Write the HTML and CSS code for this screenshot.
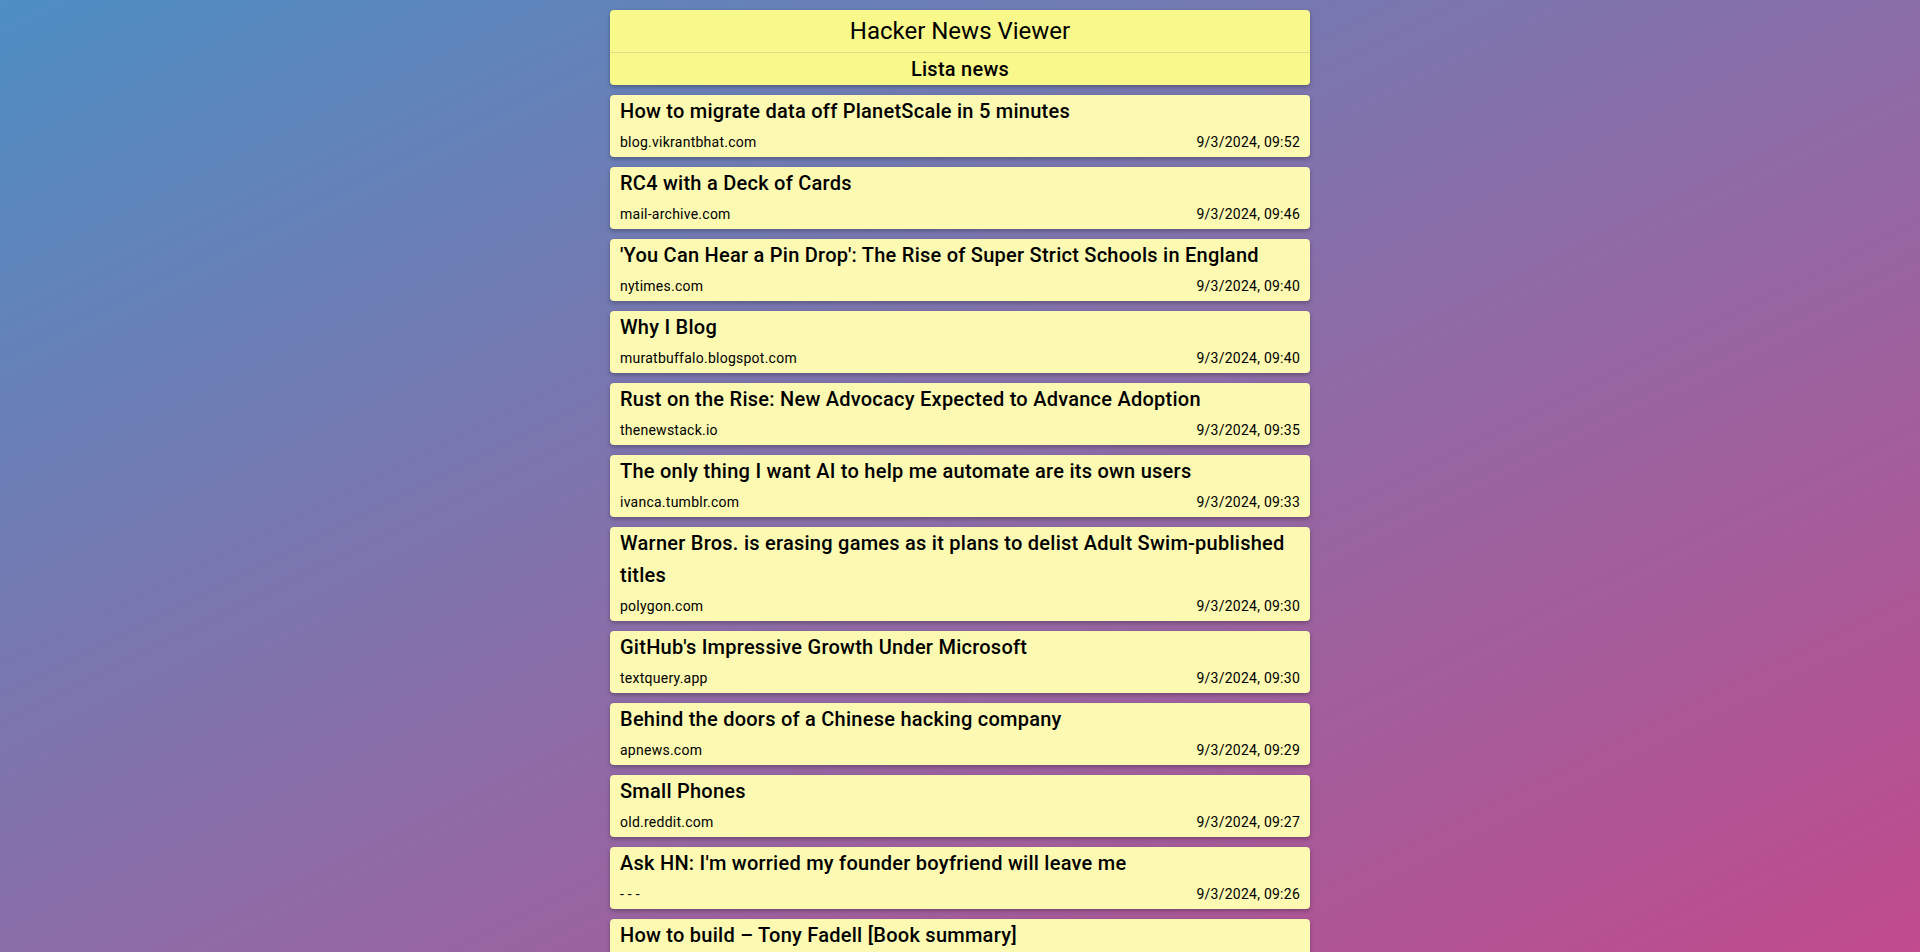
FILE: index.html
```html
<!DOCTYPE html>
<html lang="it">
<head>
<meta charset="utf-8">
<title>Hacker News Viewer</title>
<link rel="stylesheet" href="styles.css">
</head>
<body>
<main class="app">
  <header class="app-header">
    <h1 class="app-title">Hacker News Viewer</h1>
    <h2 class="app-subtitle">Lista news</h2>
  </header>
  <ul class="news-list">
    <li class="news-card"><h3 class="news-title">How to migrate data off PlanetScale in 5 minutes</h3><div class="news-meta"><span>blog.vikrantbhat.com</span><span>9/3/2024, 09:52</span></div></li>
    <li class="news-card"><h3 class="news-title">RC4 with a Deck of Cards</h3><div class="news-meta"><span>mail-archive.com</span><span>9/3/2024, 09:46</span></div></li>
    <li class="news-card"><h3 class="news-title">'You Can Hear a Pin Drop': The Rise of Super Strict Schools in England</h3><div class="news-meta"><span>nytimes.com</span><span>9/3/2024, 09:40</span></div></li>
    <li class="news-card"><h3 class="news-title">Why I Blog</h3><div class="news-meta"><span>muratbuffalo.blogspot.com</span><span>9/3/2024, 09:40</span></div></li>
    <li class="news-card"><h3 class="news-title">Rust on the Rise: New Advocacy Expected to Advance Adoption</h3><div class="news-meta"><span>thenewstack.io</span><span>9/3/2024, 09:35</span></div></li>
    <li class="news-card"><h3 class="news-title">The only thing I want AI to help me automate are its own users</h3><div class="news-meta"><span>ivanca.tumblr.com</span><span>9/3/2024, 09:33</span></div></li>
    <li class="news-card"><h3 class="news-title">Warner Bros. is erasing games as it plans to delist Adult Swim-published titles</h3><div class="news-meta"><span>polygon.com</span><span>9/3/2024, 09:30</span></div></li>
    <li class="news-card"><h3 class="news-title">GitHub's Impressive Growth Under Microsoft</h3><div class="news-meta"><span>textquery.app</span><span>9/3/2024, 09:30</span></div></li>
    <li class="news-card"><h3 class="news-title">Behind the doors of a Chinese hacking company</h3><div class="news-meta"><span>apnews.com</span><span>9/3/2024, 09:29</span></div></li>
    <li class="news-card"><h3 class="news-title">Small Phones</h3><div class="news-meta"><span>old.reddit.com</span><span>9/3/2024, 09:27</span></div></li>
    <li class="news-card"><h3 class="news-title">Ask HN: I'm worried my founder boyfriend will leave me</h3><div class="news-meta"><span>- - -</span><span>9/3/2024, 09:26</span></div></li>
    <li class="news-card"><h3 class="news-title">How to build – Tony Fadell [Book summary]</h3><div class="news-meta"><span>- - -</span><span>9/3/2024, 09:25</span></div></li>
  </ul>
</main>
</body>
</html>
```
FILE: styles.css
```css
html, body {
  margin: 0;
  padding: 0;
}

body {
  min-height: 100vh;
  font-family: Roboto, "Liberation Sans", Arial, sans-serif;
  color: #000;
  background: linear-gradient(to bottom right, #4d8ec3, #8a6ea8 50%, #c04a8c) fixed;
}

.app {
  width: 700px;
  margin: 0 auto;
  padding: 10px 0;
  display: flex;
  flex-direction: column;
  gap: 10px;
}

.app-header {
  background: #f9f88a;
  border-radius: 4px;
  box-shadow: 0 2px 4px rgba(0, 0, 0, 0.28);
  text-align: center;
}

.app-title {
  margin: 0;
  font-size: 24px;
  font-weight: 400;
  line-height: 42px;
  border-bottom: 1px solid #e0da8c;
}

.app-subtitle {
  margin: 0;
  font-size: 20px;
  font-weight: 500;
  line-height: 32px;
  letter-spacing: 0.25px;
}

.news-list {
  list-style: none;
  margin: 0;
  padding: 0;
  display: flex;
  flex-direction: column;
  gap: 10px;
}

.news-card {
  background: #fbf9b2;
  border-radius: 4px;
  box-shadow: 0 2px 4px rgba(0, 0, 0, 0.28);
  padding: 0 10px;
}

.news-title {
  margin: 0;
  font-size: 20px;
  font-weight: 500;
  line-height: 32px;
  letter-spacing: 0.25px;
}

.news-meta {
  display: flex;
  justify-content: space-between;
  font-size: 14px;
  line-height: 30px;
  letter-spacing: 0.25px;
}
```
